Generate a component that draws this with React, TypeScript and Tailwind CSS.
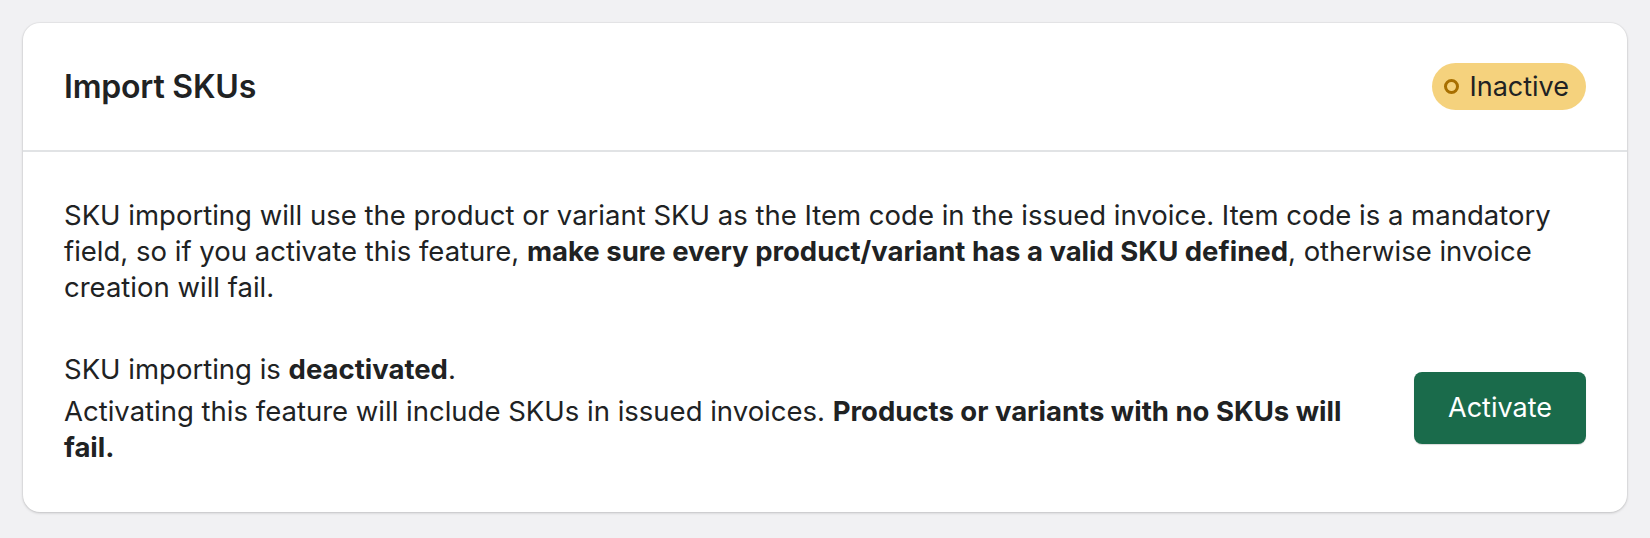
import React from "react";

// --- Badge de status ---
const StatusBadge = ({ label }: { label: string }) => (
  <span className="inline-flex h-[47px] items-center gap-[10px] rounded-full bg-[#f5d27d] pl-[12px] pr-[17px] text-[27px] leading-none text-[#202223]">
    <span className="box-border h-[15px] w-[15px] rounded-full border-[3px] border-[#a86f00]" />
    {label}
  </span>
);

export default function App() {
  return (
    <main
      className="min-h-[538px] bg-[#f1f1f3] px-[23px] pt-[23px] pb-[25px] text-[#202223]"
      style={{ fontFamily: "Inter, 'Noto Sans', sans-serif" }}
    >
      <section className="overflow-hidden rounded-[17px] bg-white shadow-[0_1px_3px_rgba(0,0,0,0.18),0_0_0_1px_rgba(0,0,0,0.03)]">
        {/* Cabeçalho */}
        <header className="flex h-[129px] items-center justify-between border-b-2 border-[#e1e3e5] px-[41px]">
          <h2 className="text-[32px] font-semibold leading-none tracking-[-0.2px]">
            Import SKUs
          </h2>
          <StatusBadge label="Inactive" />
        </header>

        {/* Corpo */}
        <div className="flex flex-col gap-[46px] px-[41px] pt-[45px] pb-[47px] text-[27.5px] leading-[36px]">
          <p>
            SKU importing will use the product or variant SKU as the Item code
            in the issued invoice. Item code is a mandatory field, so if you
            activate this feature,{" "}
            <strong className="font-bold">
              make sure every product/variant has a valid SKU defined
            </strong>
            , otherwise invoice creation will fail.
          </p>

          <div className="flex items-center gap-[36px]">
            <div className="flex flex-1 flex-col gap-[6px]">
              <p>
                SKU importing is{" "}
                <strong className="font-bold">deactivated</strong>.
              </p>
              <p>
                Activating this feature will include SKUs in issued invoices.{" "}
                <strong className="font-bold">
                  Products or variants with no SKUs will fail.
                </strong>
              </p>
            </div>
            <button className="h-[72px] w-[172px] shrink-0 rounded-[8px] bg-[#1a6b4b] text-[27px] font-normal text-white shadow-[0_1px_1px_rgba(0,0,0,0.15)]">
              Activate
            </button>
          </div>
        </div>
      </section>
    </main>
  );
}
